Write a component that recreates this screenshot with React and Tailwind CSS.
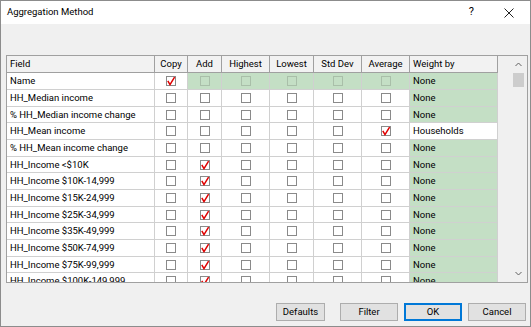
import React from "react";

const cols = [
  { key: "copy", label: "Copy", w: "w-[33px]" },
  { key: "add", label: "Add", w: "w-[34px]" },
  { key: "highest", label: "Highest", w: "w-[48px]" },
  { key: "lowest", label: "Lowest", w: "w-[44px]" },
  { key: "std", label: "Std Dev", w: "w-[48px]" },
  { key: "avg", label: "Average", w: "w-[48px]" },
];

const rows = [
  { name: "Name", checked: "copy", disabled: true, weight: "None" },
  { name: "HH_Median income", weight: "None" },
  { name: "% HH_Median income change", weight: "None" },
  { name: "HH_Mean income", checked: "avg", weight: "Households", white: true },
  { name: "% HH_Mean income change", weight: "None" },
  { name: "HH_Income <$10K", checked: "add", weight: "None" },
  { name: "HH_Income $10K-14,999", checked: "add", weight: "None" },
  { name: "HH_Income $15K-24,999", checked: "add", weight: "None" },
  { name: "HH_Income $25K-34,999", checked: "add", weight: "None" },
  { name: "HH_Income $35K-49,999", checked: "add", weight: "None" },
  { name: "HH_Income $50K-74,999", checked: "add", weight: "None" },
  { name: "HH_Income $75K-99,999", checked: "add", weight: "None" },
  { name: "HH_Income $100K-149,999", checked: "add", weight: "None" },
];

const heights = ["h-[17px]", "h-[17px]", "h-[16px]"];

function Check() {
  return (
    <svg width="10" height="10" viewBox="0 0 10 10" className="absolute left-[-1px] top-[-1px]">
      <path d="M1.8 4.8 L4 8.6 L8.6 1.2" fill="none" stroke="#e00000" strokeWidth="1.5" />
    </svg>
  );
}

function Box({ checked, disabled }) {
  return (
    <div
      className={
        "relative w-[10px] h-[10px] border " +
        (disabled ? "border-[#a9bfa9] bg-[#c4dfc5]" : "border-[#8a8a8a] bg-white")
      }
    >
      {checked && <Check />}
    </div>
  );
}

function Btn({ children, primary, w = "w-[58px]" }) {
  return (
    <div
      className={
        w +
        " h-[18px] flex items-center justify-center bg-[#e1e1e1] text-[9.5px] text-black " +
        (primary ? "border-2 border-[#0078d7]" : "border border-[#adadad]")
      }
    >
      {children}
    </div>
  );
}

export default function App() {
  return (
    <div
      className="w-[531px] h-[327px] border border-[#8c8c8c] bg-[#f0f0f0] flex flex-col overflow-hidden"
      style={{ fontFamily: 'Roboto, "Noto Sans", sans-serif' }}
    >
      <div className="h-[23px] bg-white flex items-center pl-[6px] pr-[16px] text-[9.5px] text-black shrink-0">
        <span>Aggregation Method</span>
        <span className="ml-auto mr-[30px] text-[11px]">?</span>
        <svg width="10" height="10" viewBox="0 0 10 10">
          <path d="M0.5 0.5 L9.5 9.5 M9.5 0.5 L0.5 9.5" stroke="#222" strokeWidth="1" />
        </svg>
      </div>
      <div className="pt-[31px] pl-[5px] pr-[2px]">
        <div className="h-[228px] border border-[#a0a0a0] flex bg-[#f0f0f0] overflow-hidden text-[9.5px] text-black leading-none">
          <div className="flex flex-col">
            <div className="flex h-[17px] shrink-0 bg-[#f0f0f0] border-b border-[#a0a0a0]">
              <div className="w-[148px] border-r border-[#a0a0a0] pl-[3px] flex items-center bg-[#f2f2f2]">Field</div>
              {cols.map((c) => (
                <div key={c.key} className={c.w + " border-r border-[#a0a0a0] flex items-center justify-center bg-[#f2f2f2]"}>
                  {c.label}
                </div>
              ))}
              <div className="w-[88px] border-r border-[#a0a0a0] pl-[3px] flex items-center bg-[#f2f2f2]">Weight by</div>
            </div>
            {rows.map((r, i) => (
              <div key={i} className={"flex shrink-0 " + heights[i % 3]}>
                <div className="w-[148px] bg-white border-r border-b border-[#d0d0d0] pl-[3px] pt-[3px] whitespace-nowrap">{r.name}</div>
                {cols.map((c) => {
                  const dis = r.disabled && c.key !== "copy";
                  return (
                    <div
                      key={c.key}
                      className={
                        c.w +
                        " border-r border-b border-[#d0d0d0] flex items-center justify-center " +
                        (dis ? "bg-[#c4dfc5]" : "bg-white")
                      }
                    >
                      <Box checked={r.checked === c.key} disabled={dis} />
                    </div>
                  );
                })}
                <div
                  className={
                    "w-[88px] border-r border-b border-[#d0d0d0] pl-[3px] pt-[3px] " +
                    (r.white ? "bg-white" : "bg-[#c4dfc5]")
                  }
                >
                  {r.weight}
                </div>
              </div>
            ))}
          </div>
          <div className="flex-1" />
          <div className="w-[17px] flex flex-col items-center bg-[#f0f0f0]">
            <div className="h-[17px] flex items-center justify-center">
              <svg width="7" height="5" viewBox="0 0 7 5">
                <path d="M0.5 4 L3.5 1 L6.5 4" fill="none" stroke="#606060" strokeWidth="1" />
              </svg>
            </div>
            <div className="w-[11px] h-[14px] bg-[#cdcdcd]" />
            <div className="flex-1" />
            <div className="h-[17px] flex items-center justify-center">
              <svg width="7" height="5" viewBox="0 0 7 5">
                <path d="M0.5 1 L3.5 4 L6.5 1" fill="none" stroke="#606060" strokeWidth="1" />
              </svg>
            </div>
          </div>
        </div>
        <div className="flex justify-end gap-[6px] mt-[20px] pr-[2px]">
          <div className="mr-[9px]">
            <Btn w="w-[49px]">Defaults</Btn>
          </div>
          <Btn>Filter</Btn>
          <Btn primary>OK</Btn>
          <Btn>Cancel</Btn>
        </div>
      </div>
    </div>
  );
}
